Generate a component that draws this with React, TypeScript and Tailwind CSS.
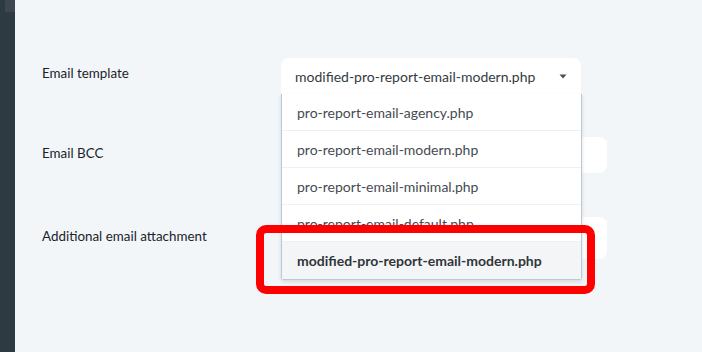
import React from "react";

const templates = [
  "pro-report-email-agency.php",
  "pro-report-email-modern.php",
  "pro-report-email-minimal.php",
  "pro-report-email-default.php",
  "modified-pro-report-email-modern.php",
];

const selected = "modified-pro-report-email-modern.php";

function FieldLabel({ children }: { children: React.ReactNode }) {
  return (
    <div className="w-[239px] shrink-0 text-[13.4px] leading-[18px] text-[#1a232b]">
      {children}
    </div>
  );
}

export default function App() {
  return (
    <div
      className="flex h-[352px] w-[702px] overflow-hidden bg-[#f3f6f9]"
      style={{ fontFamily: "Lato, 'Open Sans', sans-serif" }}
    >
      <aside className="flex w-[15px] shrink-0 flex-col bg-[#2e3a41]">
        <div className="ml-[5px] h-[12px] w-[10px] bg-[#3c474f]" />
      </aside>

      <main className="flex-1 pl-[27px] pt-[58px]">
        {/* Email template */}
        <div className="flex items-start">
          <div className="pt-[6px]">
            <FieldLabel>Email template</FieldLabel>
          </div>
          <div className="relative z-10 w-[300px]">
            <div className="flex h-[36px] items-center justify-between rounded-t-[8px] bg-white pl-[14px] pr-[14px] text-[14px] text-[#333b42]">
              <span>{selected}</span>
              <svg width="8" height="5" viewBox="0 0 8 5">
                <path d="M0.5 0.5 L7.5 0.5 L4 4.5 Z" fill="#4a4f55" />
              </svg>
            </div>
            <ul className="absolute left-0 top-[36px] w-[301px] rounded-b-[3px] border border-t-0 border-[#b7c8d6] bg-white shadow-[0_2px_4px_rgba(0,0,0,0.12)]">
              {templates.map((t, i) => {
                const isSel = t === selected;
                return (
                  <li
                    key={t}
                    className={`flex h-[37px] items-center pl-[15px] text-[14px] ${
                      i < templates.length - 1 ? "border-b border-[#eef1f4]" : ""
                    } ${isSel ? "bg-[#f4f5f7] font-bold text-[#2f353a]" : "text-[#454b51]"}`}
                  >
                    {t}
                  </li>
                );
              })}
            </ul>
          </div>
        </div>

        {/* Email BCC */}
        <div className="mt-[43px] flex items-start">
          <div className="pt-[7px]">
            <FieldLabel>Email BCC</FieldLabel>
          </div>
          <div className="h-[36px] w-[326px] rounded-[8px] bg-white" />
        </div>

        {/* Additional email attachment */}
        <div className="mt-[44px] flex items-start">
          <div className="pt-[10px]">
            <FieldLabel>Additional email attachment</FieldLabel>
          </div>
          <div className="h-[42px] w-[326px] rounded-[8px] bg-white" />
        </div>
      </main>

      {/* annotation highlight */}
      <div className="pointer-events-none absolute left-[256px] top-[225px] z-20 h-[69px] w-[339px] rounded-[10px] border-[8px] border-[#ff0000]" />
    </div>
  );
}
